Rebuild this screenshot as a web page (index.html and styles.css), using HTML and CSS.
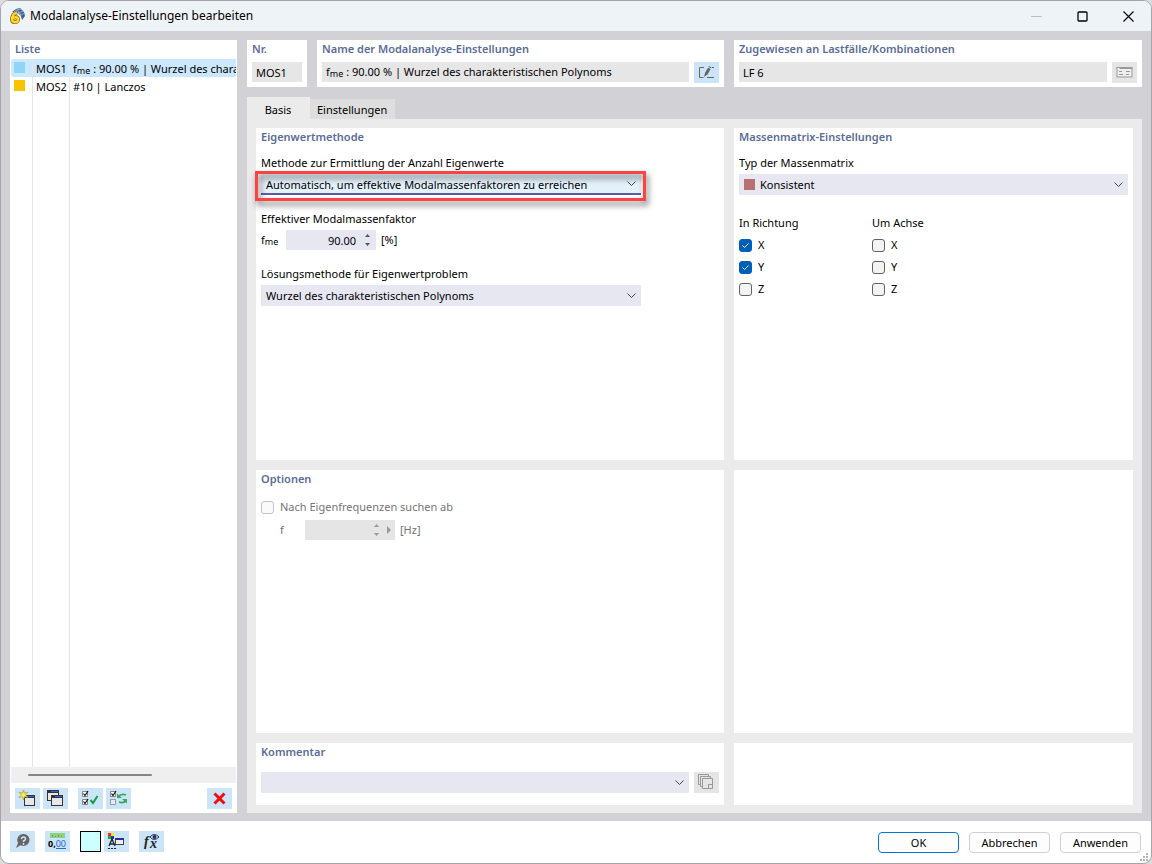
FILE: index.html
```html
<!DOCTYPE html>
<html lang="de">
<head>
	<meta charset="UTF-8">
	<meta name="viewport" content="width=device-width, initial-scale=1">
	<title>Modalanalyse-Einstellungen bearbeiten</title>
	<link rel="stylesheet" href="styles.css">
</head>
<body>
<div class="window">
	<header class="titlebar">
		<svg class="app-icon" width="16" height="16" viewBox="0 0 16 16">
			<path d="M3 4l4-3 4-1 4 4 1 4-3 4-1-4-3-3z" fill="#3f5f8c"/>
			<path d="M5 4l3-2 4 5M8 2l4-1M9 5l5-2M11 8l4-3" stroke="#9db4d2" fill="none"/>
			<path d="M8 4.500C4 6 3 8 3 11c0 4.500 6 4 6 .5 0-3-4-3-6-.5" stroke="#8f6d10" stroke-width="4" fill="none"/>
			<path d="M8 4.500C4 6 3 8 3 11c0 4.500 6 4 6 .5 0-3-4-3-6-.5" stroke="#ffd52e" stroke-width="2.400" fill="none"/>
		</svg>
		<h1>Modalanalyse-Einstellungen bearbeiten</h1>
		<button class="win-btn" aria-label="Minimieren" disabled><svg width="11" height="11"><path d="M0 5.500h11" stroke="#b9bfc4"/></svg></button>
		<button class="win-btn" aria-label="Maximieren"><svg width="11" height="11"><rect x="1" y="1" width="9" height="9" rx="1" stroke="#000" fill="none" stroke-width="1.300"/></svg></button>
		<button class="win-btn" aria-label="Schließen"><svg width="11" height="11"><path d="M.5.5l10 10M10.500.5l-10 10" stroke="#000" stroke-width="1.100"/></svg></button>
	</header>

	<main class="main">
		<aside class="card sidebar">
			<h2>Liste</h2>
			<ul class="list">
				<li class="active"><span class="cell"><i class="swatch blue"></i></span><span class="cell">MOS1</span><span class="cell name">f<sub>me</sub> : 90.00 % | Wurzel des charakteristischen Polynoms</span></li>
				<li><span class="cell"><i class="swatch yellow"></i></span><span class="cell">MOS2</span><span class="cell name">#10 | Lanczos</span></li>
				<li class="rest"><span class="cell"></span><span class="cell"></span><span class="cell name"></span></li>
			</ul>
			<div class="scrollbar"><div class="thumb"></div></div>
			<div class="tools">
				<button class="icon-btn" aria-label="Neu"><svg width="19" height="17">
					<rect x="6.500" y="6.500" width="10" height="9" fill="#e8e8e8" stroke="#333"/><path d="M6 5h11v3H6z" fill="#333"/><path d="M9 6h7v1H9z" fill="#3a5cff"/>
					<path d="M5.500 0l1 3.200 3.500-1-2.500 2.600L10 7.500l-3.500-.8-1 3.300-1-3.300L1 7.500l2.500-2.700L1 2.200l3.500 1z" fill="#fff04a" stroke="#a08f20" stroke-width=".6"/></svg></button>
				<button class="icon-btn" aria-label="Kopieren"><svg width="19" height="17">
					<rect x="1.500" y="1.500" width="11" height="9" fill="#e8e8e8" stroke="#333"/><path d="M1 0h12v3H1z" fill="#333"/><path d="M5 1h7v1H5z" fill="#3a5cff"/>
					<rect x="5.500" y="6.500" width="11" height="9" fill="#e8e8e8" stroke="#333"/><path d="M5 5h12v3H5z" fill="#333"/><path d="M9 6h7v1H9z" fill="#3a5cff"/></svg></button>
				<button class="icon-btn gap" aria-label="Alle auswählen"><svg width="19" height="17" fill="none">
					<path d="M1.500 1.500h5v5h-5zM1.500 9.500h5v5h-5z" fill="#fff" stroke="#888"/><path d="M2.500 3.500l1.500 2L7 1M2.500 11.500l1.500 2L7 9" stroke="#111" stroke-width="1.200"/>
					<path d="M9.500 10l2.500 3 4.500-7" stroke="#12a04a" stroke-width="2"/></svg></button>
				<button class="icon-btn" aria-label="Auswahl umkehren"><svg width="19" height="17" fill="none">
					<path d="M1.500 1.500h5v5h-5z" fill="#fff" stroke="#888"/><path d="M1.500 9.500h5v5h-5z" fill="#e3edf5" stroke="#999"/><path d="M2.500 3.500l1.500 2L7 1" stroke="#111" stroke-width="1.200"/>
					<path d="M10 6q3-2.500 7-1M17 11q-3 2.500-7 1" stroke="#36a863" stroke-width="1.800"/><path d="M8 3.500v4.500h5zM18 13.500V9h-5z" fill="#36a863"/></svg></button>
				<button class="icon-btn last" aria-label="Löschen"><svg width="19" height="17" fill="none">
					<path d="M4.500 3.500l10 10M14.500 3.500l-10 10" stroke="#f40d0d" stroke-width="3"/></svg></button>
			</div>
		</aside>

		<section class="content">
			<div class="head">
				<div class="card nr">
					<h2><label for="nr">Nr.</label></h2>
					<div class="row"><input class="text" id="nr" value="MOS1" readonly></div>
				</div>
				<div class="card name-card">
					<h2 id="nameLabel">Name der Modalanalyse-Einstellungen</h2>
					<div class="row">
						<div class="text" role="textbox" aria-readonly="true" aria-labelledby="nameLabel">f<sub>me</sub> : 90.00 % | Wurzel des charakteristischen Polynoms</div>
						<button class="icon-btn" aria-label="Name bearbeiten"><svg width="19" height="17" fill="none">
							<path d="M7 3.500H2.500v10h4M10 13.500h7M15 3.500h2" stroke="#666"/><path d="M7 13l1-4 4-7 2.500 1.500-4 7z" fill="#666"/><path d="M11 3l3 2" stroke="#cce4f7"/></svg></button>
					</div>
				</div>
				<div class="card lf-card">
					<h2><label for="lf">Zugewiesen an Lastfälle/Kombinationen</label></h2>
					<div class="row">
						<input class="text" id="lf" value="LF 6" readonly>
						<button class="icon-btn off" aria-label="Lastfälle zuweisen"><svg width="19" height="17" fill="none">
							<rect x="2" y="4" width="15" height="9" fill="#eee" stroke="#999"/><path d="M1.500 4h16" stroke="#999" stroke-width="2"/><path d="M2.500 4.500h2" stroke="#fff"/><path d="M4 7.500h3M11 7.500h4M4 10.500h4M11 10.500h3" stroke="#999"/></svg></button>
					</div>
				</div>
			</div>

			<nav class="tabs" role="tablist">
				<button class="tab active" role="tab" aria-selected="true">Basis</button>
				<button class="tab" role="tab" aria-selected="false">Einstellungen</button>
			</nav>

			<div class="panel">
				<div class="card">
					<h2>Eigenwertmethode</h2>
					<div class="form">
						<div class="group">
							<label for="methode">Methode zur Ermittlung der Anzahl Eigenwerte</label>
							<div class="marked">
								<select id="methode" class="focus"><option>Automatisch, um effektive Modalmassenfaktoren zu erreichen</option></select>
							</div>
						</div>
						<div class="group">
							<label for="fme">Effektiver Modalmassenfaktor</label>
							<div class="value">
								<span class="symbol">f<sub>me</sub></span>
								<span class="spin"><input id="fme" value="90.00"><svg width="7" height="14"><path d="M1 4l2.500-3L6 4zM1 10l2.500 3L6 10z" fill="#555"/></svg></span>
								<span>[%]</span>
							</div>
						</div>
						<div class="group">
							<label for="loesung">Lösungsmethode für Eigenwertproblem</label>
							<select id="loesung"><option>Wurzel des charakteristischen Polynoms</option></select>
						</div>
					</div>
				</div>

				<div class="card">
					<h2>Massenmatrix-Einstellungen</h2>
					<div class="form wide">
						<div class="group">
							<label for="typ">Typ der Massenmatrix</label>
							<div class="color-select">
								<select id="typ"><option>Konsistent</option></select>
								<i class="swatch red"></i>
							</div>
						</div>
					</div>
					<div class="checks">
						<fieldset>
							<legend>In Richtung</legend>
							<label><input type="checkbox" checked>X</label>
							<label><input type="checkbox" checked>Y</label>
							<label><input type="checkbox">Z</label>
						</fieldset>
						<fieldset>
							<legend>Um Achse</legend>
							<label><input type="checkbox">X</label>
							<label><input type="checkbox">Y</label>
							<label><input type="checkbox">Z</label>
						</fieldset>
					</div>
				</div>

				<div class="card">
					<h2>Optionen</h2>
					<div class="form options">
						<label class="check"><input type="checkbox" disabled>Nach Eigenfrequenzen suchen ab</label>
						<div class="value">
							<label class="symbol" for="freq">f</label>
							<span class="spin"><input id="freq" disabled><svg width="20" height="14"><path d="M1 4l2.500-3L6 4zM1 10l2.500 3L6 10zM14 3l4 4-4 4z" fill="#999"/></svg></span>
							<span>[Hz]</span>
						</div>
					</div>
				</div>
				<div class="card"></div>

				<div class="card">
					<h2><label for="kommentar">Kommentar</label></h2>
					<div class="row comment">
						<select id="kommentar"><option></option></select>
						<button class="icon-btn off" aria-label="Kommentare"><svg width="19" height="17" fill="#e5e5e5" stroke="#999">
							<path d="M1.500.5h10v10h-10z"/><path d="M3.500 2.500h10v10h-10z"/><path d="M5.500 4.500h10v10h-10z"/><path d="M11.500 14.500v-4h4" fill="none"/></svg></button>
					</div>
				</div>
				<div class="card"></div>
			</div>
		</section>
	</main>

	<footer class="footer">
		<button class="icon-btn" aria-label="Hilfe"><svg width="19" height="17">
			<path d="M10.500 1a6 6 0 1 1-3 11.200L3 15l2-5A6 6 0 0 1 10.500 1z" fill="#666"/><path d="M8.500 6q0-2 2-2t2 2q0 1-2 2v1M10.500 10v2" stroke="#cce4f7" stroke-width="1.500" fill="none"/></svg></button>
		<button class="icon-btn gap" aria-label="Einheiten"><svg width="19" height="17">
			<path d="M2 0h15v5H2z" fill="#8ed17f"/><path d="M4.500 2v2M7.500 3v1M10.500 2v2M13.500 3v1" stroke="#5aa850"/>
			<text x="0" y="14" class="unit-text">0,<tspan class="unit-blue">00</tspan></text><path d="M8 15.500h10" stroke="#2767cf"/></svg></button>
		<button class="color-btn gap" aria-label="Farbe"></button>
		<button class="icon-btn" aria-label="Darstellung"><svg width="19" height="17">
			<path d="M1 0h3v3H1z" fill="#f22"/><path d="M4 0h3v3H4z" fill="#fe0"/><path d="M1 3h3v3H1z" fill="#2a2"/><path d="M4 3h3v3H4z" fill="#23d"/>
			<path d="M2 13l3-7 3 7M3 11h4" stroke="#222" stroke-width="1.300" fill="none"/><path d="M1 15h2v1H1zM4 15h2v1H4zM7 15h2v1H7z" fill="#222"/>
			<rect x="8.500" y="5.500" width="8" height="6" fill="#eee" stroke="#444"/><path d="M9 5h8v2H9z" fill="#2b2f9c"/></svg></button>
		<button class="icon-btn gap" aria-label="Formel"><svg width="19" height="17">
			<text x="2" y="13" class="fx-text">f</text><text x="8" y="15" class="fx-text">x</text>
			<path d="M8 4q4-5 9 0-5 5-9 0z" fill="#dce7ff" stroke="#25315f"/><circle cx="12.500" cy="4" r="2" fill="#25315f"/></svg></button>
		<button class="btn primary">OK</button>
		<button class="btn">Abbrechen</button>
		<button class="btn">Anwenden</button>
		<svg class="grip" width="8" height="8" fill="#b5b5b5"><path d="M6 0h2v2H6zM3 3h2v2H3zM6 3h2v2H6zM0 6h2v2H0zM3 6h2v2H3zM6 6h2v2H6z"/></svg>
	</footer>
</div>
</body>
</html>
```
FILE: styles.css
```css
*{box-sizing: border-box; margin: 0; padding: 0;}
body{ background: #dcdbdb; color: #000; font: 11px/18px "Noto Sans", "Open Sans", sans-serif;}
button,input,select{ font: inherit; color: inherit; border: 0; border-radius: 0;}
svg{ display: block; flex: none;}
sub{ font-size: 9px; line-height: 0; vertical-align: -1px;}
h2{ height: 18px; font-size: 11px; line-height: 18px; font-weight: 600; color: #5a6c98; white-space: nowrap;}

.window{ display: flex; flex-direction: column; min-height: 100vh; border: 1px solid #a6a6aa; border-radius: 9px; overflow: hidden; background: #fff;}

.titlebar{ display: flex; align-items: center; height: 30px; padding-left: 8px; background: #eef3f8;}
.titlebar h1{ flex: 1; padding-left: 5px; font-size: 12px; font-weight: 400;}
.win-btn{ display: flex; align-items: center; justify-content: center; width: 46px; height: 30px; background: none;}

.main{ flex: 1; display: flex; gap: 10px; padding: 9px; padding-bottom: 8px; background: #d2d1d6;}
.card{ min-width: 0; padding: 0 5px; background: #fff;}

.sidebar{ display: flex; flex-direction: column; width: 227px; flex: none; padding: 0 1px;}
.sidebar h2{ padding-left: 4px;}
.list{ flex: 1; display: flex; flex-direction: column; margin-top: 1px; list-style: none;}
.list li{ display: grid; grid-template-columns: 22px 37px 1fr; height: 18px; line-height: 20px;}
.list .rest{ flex: 1; height: auto;}
.list .active{ background: #cce8ff; border-radius: 3px 0 0 3px;}
.cell{ padding-left: 3px; border-right: 1px solid #e5e5e5; white-space: nowrap; overflow: hidden;}
.cell.name{ border: 0;}
.swatch{ display: block; width: 11px; height: 11px; margin-top: 3px;}
.blue{ background: #8fd5f4;}
.yellow{ background: #f7c400;}
.red{ background: #b97070;}
.scrollbar{ height: 16px; padding: 7px 17px; background: #efefef;}
.thumb{ width: 65%; height: 2px; border-radius: 1px; background: #858585;}
.tools{ display: flex; gap: 3px; padding: 5px 4px 4px;}

.icon-btn{ display: flex; align-items: center; justify-content: center; flex: none; width: 25px; height: 21px; background: #cce4f7;}
.icon-btn.off{ background: #e5e5e5;}
.tools .gap{ margin-left: 7px;}
.tools .last{ margin-left: auto;}

.content{ flex: 1; display: flex; flex-direction: column; min-width: 0;}
.head{ display: grid; grid-template-columns: 60px minmax(0, 407fr) minmax(0, 408fr); gap: 10px;}
.head .card{ height: 47px;}
.row{ display: flex; gap: 5px; margin-top: 4px;}
.row.comment{ margin-top: 11px;}
.text{ flex: 1; min-width: 0; height: 20px; padding: 0 4px; line-height: 20px; background: #e6e6e6; white-space: nowrap; overflow: hidden;}
input.text{ padding: 1px 4px 0;}

.tabs{ display: flex; align-items: flex-end; height: 22px; margin-top: 10px;}
.tab{ height: 20px; padding: 2px 8px 0 7px; background: #dedede;}
.tab.active{ width: 63px; height: 22px; padding-top: 4px; background: #ebebeb;}

.panel{ flex: 1; display: grid; grid-template-columns: minmax(0, 468fr) minmax(0, 399fr); grid-template-rows: 332fr 263fr 62px; gap: 10px; padding: 9px; padding-bottom: 8px; background: #ebebeb;}
.form{ display: flex; flex-direction: column; gap: 15px; max-width: 380px; margin-top: 8px;}
.form.wide{ max-width: none;}
.form.options{ gap: 2px; color: #757575;}
.group{ display: flex; flex-direction: column; gap: 2px;}

select{ display: block; width: 100%; height: 21px; padding: 0 20px 0 5px; appearance: none; background: #e7e7f2 url("data:image/svg+xml,%3Csvg xmlns='http://www.w3.org/2000/svg' width='9' height='5'%3E%3Cpath d='M.5.5l4 4 4-4' fill='none' stroke='%23444'/%3E%3C/svg%3E") no-repeat right 5px center;}
select.focus{ padding-top: 2px; background-color: #e3f1fb; border-bottom: 2px solid #5c5ca6;}
.color-select{ position: relative;}
.color-select select{ padding-left: 21px;}
.color-select .swatch{ position: absolute; left: 5px; top: 5px; margin: 0; pointer-events: none;}

/* red frame around the method select */
.marked{ position: relative;}
.marked::after{ content: ""; position: absolute; inset: -3px -5px -6px -6px; border: 3px solid #ff4343; filter: drop-shadow(2px 4px 3px rgba(0,0,0,.6)); pointer-events: none;}

.value{ display: flex; align-items: center; gap: 5px; height: 20px;}
.symbol{ width: 20px;}
.spin{ position: relative; width: 90px;}
.spin input{ display: block; width: 100%; height: 20px; padding-right: 20px; text-align: right; background: #e7e7f2;}
.spin svg{ position: absolute; right: 5px; top: 3px;}
.spin input:disabled{ background: #e5e5e5;}
.options .value{ padding-left: 19px;}
.options .spin svg{ right: 2px;}

.checks{ display: flex; margin-top: 19px;}
fieldset{ width: 133px; border: 0;}
legend{ margin-bottom: 2px;}
.check,.checks label{ display: flex; align-items: center; gap: 6px; height: 22px;}
input[type=checkbox]{ width: 13px; height: 13px; flex: none; appearance: none; border: 1px solid #626262; border-radius: 3px; background: #f3f3f3;}
input[type=checkbox]:checked{ border-color: #005fb8; background: #005fb8 url("data:image/svg+xml,%3Csvg xmlns='http://www.w3.org/2000/svg' width='11' height='11'%3E%3Cpath d='M2.500 5.500l2 2 4-4' fill='none' stroke='%23fff'/%3E%3C/svg%3E") center no-repeat;}
input[type=checkbox]:disabled{ border-color: #c3c3c3; background: #fafafa;}

.footer{ position: relative; display: flex; align-items: center; gap: 10px; height: 42px; padding: 0 10px 0 9px;}
.footer .icon-btn,.color-btn{ margin-bottom: 2px;}
.color-btn{ width: 21px; height: 21px; border: 1px solid #000; background: #ccffff;}
.color-btn + .icon-btn{ margin-left: -7px;}
.btn{ width: 81px; height: 21px; padding-top: 1px; border: 1px solid #d0d0d0; border-radius: 4px; background: #fdfdfd;}
.btn.primary{ margin-left: auto; border-color: #0078d4;}
.grip{ position: absolute; right: 3px; bottom: 2px;}
.unit-text{ font: 700 9px "Noto Sans", sans-serif;}
.unit-blue{ fill: #2767cf; font-weight: 400;}
.fx-text{ font: italic 700 14px "Liberation Serif", serif; fill: #222;}
```
